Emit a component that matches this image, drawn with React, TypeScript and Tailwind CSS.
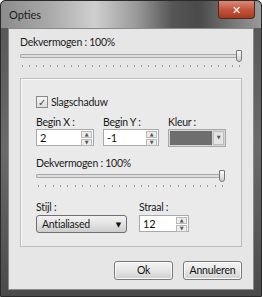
import React from "react";

// Win7-style "Opties" dialog, grayscale theme

const font = { fontFamily: 'Lato, "Open Sans", "DejaVu Sans", sans-serif' };

function Ticks({ count }: { count: number }) {
  return (
    <div className="flex justify-between px-[2px] h-[3px]">
      {Array.from({ length: count }).map((_, i) => (
        <span key={i} className="w-px h-[2px] bg-[#9a9a9a]" />
      ))}
    </div>
  );
}

function Slider({ ticks }: { ticks: number }) {
  return (
    <div className="flex flex-col gap-[3px]">
      <div className="relative h-[12px] flex items-center">
        <div className="w-full h-[4px] border border-[#a8a8a8] bg-[#dcdcdc] rounded-[1px]" />
        <div className="absolute right-0 top-0 w-[6px] h-[12px] border border-[#777] bg-gradient-to-b from-[#fafafa] to-[#cfcfcf] rounded-b-[3px] rounded-t-[1px]" />
      </div>
      <Ticks count={ticks} />
    </div>
  );
}

function Spin({ value, width }: { value: string; width: string }) {
  return (
    <div className={`flex items-stretch h-[17px] border border-[#a9a9a9] bg-white ${width}`}>
      <span className="flex-1 pl-[3px] text-[11px] leading-[15px] text-[#111]">{value}</span>
      <div className="flex flex-col w-[11px] my-[1px] mr-[1px] gap-px">
        <span className="flex-1 flex items-center justify-center border border-[#b8b8b8] bg-[#ececec] text-[5px] leading-none text-[#555]">▲</span>
        <span className="flex-1 flex items-center justify-center border border-[#b8b8b8] bg-[#ececec] text-[5px] leading-none text-[#555]">▼</span>
      </div>
    </div>
  );
}

function Button({ label }: { label: string }) {
  return (
    <button className="w-[59px] h-[19px] border border-[#7a7a7a] rounded-[3px] bg-gradient-to-b from-[#f4f4f4] via-[#e6e6e6] to-[#cfcfcf] text-[10.5px] tracking-[-0.2px] leading-none text-[#111] shadow-[inset_0_0_0_1px_#fbfbfb]">
      {label}
    </button>
  );
}

export default function App() {
  return (
    <div
      style={font}
      className="w-[262px] h-[297px] flex flex-col px-[7px] pb-[6px] bg-gradient-to-b from-[#555] via-[#6a6a6a] to-[#4a4a4a] border border-[#2a2a2a] rounded-t-[5px]"
    >
      {/* Title bar */}
      <div className="h-[27px] -mx-[7px] px-[8px] flex items-start justify-between bg-[linear-gradient(90deg,#8c8c8c_0%,#a8a8a8_18%,#cfcfcf_36%,#9a9a9a_52%,#555_66%,#4a4a4a_76%,#7a7a7a_90%,#9a9a9a_100%)] rounded-t-[5px]">
        <span className="mt-[6px] text-[11px] text-[#1c1c1c]">Opties</span>
        <div className="-mr-[2px] w-[37px] h-[18px] flex items-center justify-center border border-[#4a2a22] border-t-0 rounded-b-[4px] bg-gradient-to-b from-[#d98a78] via-[#c4553d] to-[#a83a24] text-white text-[11px] font-bold leading-none">
          ✕
        </div>
      </div>

      {/* Client area */}
      <div className="flex-1 flex flex-col bg-[#e6e6e6] border border-[#8a8a8a] px-[11px] pt-[7px] text-[10.5px] tracking-[-0.25px] text-[#1a1a1a]">
        <span className="leading-[13px]">Dekvermogen : 100%</span>
        <div className="mt-[1px]">
          <Slider ticks={32} />
        </div>

        {/* Group box */}
        <div className="mt-[10px] border border-[#bcbcbc] shadow-[inset_1px_1px_0_#fafafa] bg-[#eaeaea] px-[15px] pt-[17px] pb-[13px] flex flex-col">
          <label className="flex items-center gap-[3px] h-[12px]">
            <span className="w-[12px] h-[12px] border border-[#8a8a8a] bg-gradient-to-b from-[#f6f6f6] to-[#dcdcdc] flex items-center justify-center text-[10px] leading-none text-[#3a4a5a] font-bold">
              ✓
            </span>
            <span className="leading-[13px]">Slagschaduw</span>
          </label>

          <div className="mt-[8px] flex gap-[9px]">
            <div className="flex flex-col w-[58px]">
              <span className="leading-[13px]">Begin X :</span>
              <Spin value="2" width="w-[58px]" />
            </div>
            <div className="flex flex-col w-[56px]">
              <span className="leading-[13px]">Begin Y :</span>
              <Spin value="-1" width="w-[56px]" />
            </div>
            <div className="flex flex-col w-[60px]">
              <span className="leading-[13px]">Kleur :</span>
              <div className="flex items-stretch h-[18px] border border-[#a9a9a9] bg-[#d6d6d6] p-[1px] gap-[1px]">
                <span className="flex-1 bg-[#6e6e6e]" />
                <span className="w-[11px] flex items-center justify-center border border-[#bdbdbd] bg-[#e4e4e4] text-[5px] text-[#555]">▼</span>
              </div>
            </div>
          </div>

          <span className="mt-[10px] leading-[13px]">Dekvermogen : 100%</span>
          <div className="pr-[1px]">
            <Slider ticks={26} />
          </div>

          <div className="mt-[13px] flex gap-[12px]">
            <div className="flex flex-col w-[91px]">
              <span className="leading-[13px] mb-px">Stijl :</span>
              <div className="h-[18px] flex items-center justify-between px-[5px] border border-[#707070] rounded-[3px] bg-gradient-to-b from-[#f2f2f2] via-[#e3e3e3] to-[#cdcdcd]">
                <span className="leading-none">Antialiased</span>
                <span className="text-[7px] leading-none text-[#111]">▼</span>
              </div>
            </div>
            <div className="flex flex-col w-[50px]">
              <span className="leading-[13px] mb-px">Straal :</span>
              <Spin value="12" width="w-[50px]" />
            </div>
          </div>
        </div>

        <div className="mt-[14px] flex justify-end gap-[10px]">
          <Button label="Ok" />
          <Button label="Annuleren" />
        </div>
      </div>
    </div>
  );
}
